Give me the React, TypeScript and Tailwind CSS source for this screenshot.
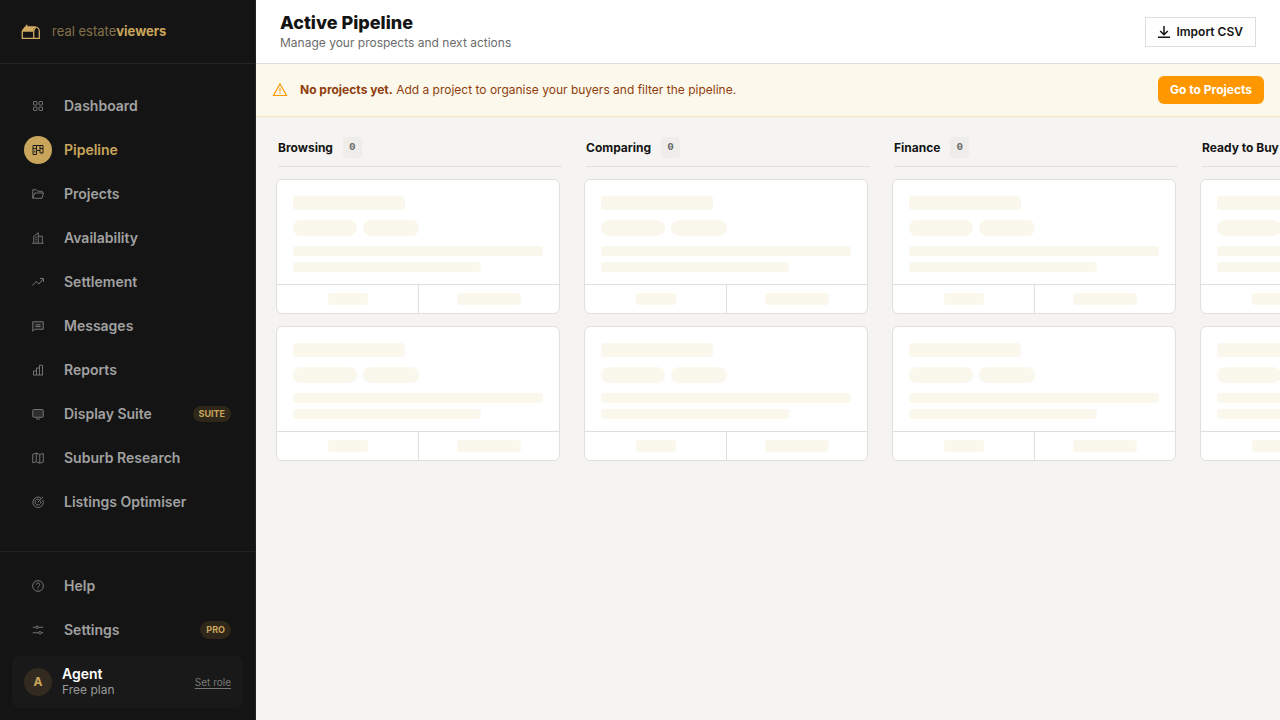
import type { ReactNode } from "react";

function Icon({ children }: { children: ReactNode }) {
  return (
    <svg viewBox="0 0 24 24" fill="none" stroke="currentColor" strokeWidth="1.900" className="size-3" aria-hidden="true">
      {children}
    </svg>
  );
}

type NavItem = { label: string; icon: ReactNode; badge?: ReactNode; active?: boolean };

const mainNav: NavItem[] = [
  {
    label: "Dashboard",
    icon: (
      <>
        <rect x="3" y="3" width="7" height="7" rx="1" />
        <rect x="14" y="3" width="7" height="7" rx="1" />
        <rect x="3" y="14" width="7" height="7" rx="1" />
        <rect x="14" y="14" width="7" height="7" rx="1" />
      </>
    ),
  },
  {
    label: "Pipeline",
    active: true,
    icon: (
      <path d="M2 3h20v15h-6v-5H9v8H2zM9 3v10M16 3v10M2 9h7M16 9h6M5.500 13v4" />
    ),
  },
  {
    label: "Projects",
    icon: <path d="M1.500 20.500V3.500h7l3 3h9V10M1.500 20.500 5.500 10h17.500l-3 10.500z" />,
  },
  {
    label: "Availability",
    icon: (
      <>
        <path d="M.500 22.500h23M3.500 22.500V8.500l9-7v21M12.500 8.500h8v14" />
        <path d="M6.500 10.500h3M6.500 14.500h3M6.500 18.500h3" />
      </>
    ),
  },
  {
    label: "Settlement",
    icon: (
      <>
        <path d="M1 19l7-8 6 5 8-10" />
        <path d="M16 5h7v7" />
      </>
    ),
  },
  {
    label: "Messages",
    icon: (
      <>
        <path d="M1.500 3.500h21v15H6l-4.500 4z" fill="currentColor" fillOpacity="0.15" />
        <path d="M7 9.500h10M7 13h10" />
      </>
    ),
  },
  {
    label: "Reports",
    icon: (
      <>
        <path d="M2 22h20" />
        <path d="M3 22v-8h6M9 22V8h6M15 22V2.500h6V22" />
      </>
    ),
  },
  {
    label: "Display Suite",
    badge: <span className="ml-auto rounded-full bg-[#2f271a] px-1.5 text-[9px] leading-4 font-bold text-[#c9a55c]">SUITE</span>,
    icon: (
      <>
        <rect x="1.500" y="3" width="21" height="15.500" rx="1.500" fill="currentColor" fillOpacity="0.25" />
        <path d="M8 22h8" />
      </>
    ),
  },
  {
    label: "Suburb Research",
    icon: (
      <>
        <path d="M1.500 4.500 8.500 2l7 3 7-2v17l-7 2.500-7-3-7 2z" />
        <path d="M8.500 2v17.500M15.500 5v17.500" />
      </>
    ),
  },
  {
    label: "Listings Optimiser",
    icon: (
      <>
        <path d="M18 3.800A10.500 10.500 0 1 0 21.800 8.200" />
        <path d="M14.800 7.200A5.800 5.800 0 1 0 17.200 10" />
        <path d="M11 13 22.500 1.500" />
      </>
    ),
  },
];

const footerNav: NavItem[] = [
  {
    label: "Help",
    icon: (
      <>
        <circle cx="12" cy="12" r="10.700" />
        <path d="M8.500 9.500a3.500 3.500 0 1 1 5.200 3c-1.300.700-1.700 1.300-1.700 2.500M12 17v2" />
      </>
    ),
  },
  {
    label: "Settings",
    badge: <span className="ml-auto rounded-full bg-[#2f271a] px-1.5 text-[9px] leading-[18px] font-bold text-[#c9a55c]">PRO</span>,
    icon: (
      <>
        <path d="M1.500 6.500h6M12.500 6.500h10M1.500 17.500h12M18.500 17.500h4" />
        <circle cx="10" cy="6.500" r="2.500" />
        <circle cx="16" cy="17.500" r="2.500" />
      </>
    ),
  },
];

const columns = ["Browsing", "Comparing", "Finance", "Ready to Buy"];

function NavLink({ item }: { item: NavItem }) {
  return (
    <li>
      <a href="#" aria-current={item.active ? "page" : undefined} className="flex h-11 items-center gap-3 px-3">
        <span
          className={
            item.active
              ? "flex size-7 items-center justify-center rounded-full bg-[#c9a55c] text-[#141414]"
              : "flex size-7 items-center justify-center text-[#777777]"
          }
        >
          <Icon>{item.icon}</Icon>
        </span>
        <span className={item.active ? "text-sm font-semibold text-[#c9a55c]" : "text-sm font-semibold text-[#a1a1a1]"}>
          {item.label}
        </span>
        {item.badge}
      </a>
    </li>
  );
}

function Sidebar() {
  return (
    <aside className="flex w-64 shrink-0 flex-col border-r border-[#222222] bg-[#141414]">
      <div className="flex h-16 shrink-0 items-center gap-3 border-b border-[#252525] px-5">
        <svg viewBox="0 0 20 16" fill="none" stroke="#d0aa62" strokeWidth="1.300" className="h-4 w-5" aria-hidden="true">
          <path d="M2.300 7v7.300h17V7.500c0-2-1.200-4.300-3.300-4.300H5.500L2.300 7" />
          <path d="M1.600 7.800 5 2.600h10.500c-1.300 1-2 2.800-2 5.200z" fill="#d0aa62" stroke="none" />
          <path d="M13.700 14V8c0-2 .800-3.800 2.300-4.800" />
          <path d="M6.700 4V.800" strokeWidth="1.600" />
        </svg>
        <span className="text-[13px] text-[#83704a]">
          real estate<b className="font-bold text-[#c9a55c]">viewers</b>
        </span>
      </div>
      <nav aria-label="Main" className="flex-1 px-3 py-5">
        <ul>
          {mainNav.map((item) => (
            <NavLink key={item.label} item={item} />
          ))}
        </ul>
      </nav>
      <div className="border-t border-[#222222] p-3">
        <ul>
          {footerNav.map((item) => (
            <NavLink key={item.label} item={item} />
          ))}
        </ul>
        <div className="mt-1 flex h-13 items-center gap-2.5 rounded-lg bg-[#191919] px-3">
          <span className="flex size-7 items-center justify-center rounded-full bg-[#332b20] text-xs font-bold text-[#c9a55c]">A</span>
          <div>
            <p className="text-sm leading-4 font-semibold text-white">Agent</p>
            <p className="text-xs text-[#999999]">Free plan</p>
          </div>
          <a href="#" className="ml-auto text-[10px] text-[#777777] underline underline-offset-2">
            Set role
          </a>
        </div>
      </div>
    </aside>
  );
}

function SkeletonCard() {
  return (
    <div className="rounded-md border border-[#e1dfda] bg-white">
      <div className="px-4 pt-4 pb-3">
        <div className="h-3.5 w-28 rounded-[3px] bg-[#faf7ed]" />
        <div className="mt-2.5 flex gap-1.5">
          <div className="h-4 w-16 rounded-full bg-[#faf7ed]" />
          <div className="h-4 w-14 rounded-full bg-[#faf7ed]" />
        </div>
        <div className="mt-2.5 h-2.5 rounded-[3px] bg-[#faf7ed]" />
        <div className="mt-1.5 h-2.5 w-3/4 rounded-[3px] bg-[#faf7ed]" />
      </div>
      <div className="grid grid-cols-2 border-t border-[#e1dfda]">
        <div className="flex justify-center py-2">
          <div className="h-3 w-10 rounded-[3px] bg-[#faf7ed]" />
        </div>
        <div className="flex justify-center border-l border-[#e1dfda] py-2">
          <div className="h-3 w-16 rounded-[3px] bg-[#faf7ed]" />
        </div>
      </div>
    </div>
  );
}

export default function App() {
  return (
    <div className="flex min-h-screen bg-[#f6f4f2] font-['Inter',sans-serif] text-[#141414]">
      <Sidebar />
      <main className="flex min-w-0 flex-1 flex-col">
        <header className="flex h-16 shrink-0 items-center justify-between border-b border-[#e0deda] bg-white px-6">
          <div className="pt-0.5">
            <h1 className="text-lg leading-5 font-extrabold">Active Pipeline</h1>
            <p className="text-xs leading-5 text-[#6b6b6b]">Manage your prospects and next actions</p>
          </div>
          <button type="button" className="flex h-[30px] items-center gap-1.5 border border-[#e0deda] bg-white px-3 text-xs font-semibold">
            <svg viewBox="1 1 12 12" fill="none" stroke="currentColor" strokeWidth="1.500" className="size-3" aria-hidden="true">
              <path d="M7 1v8.500M3.200 6 7 9.700 10.800 6M1 12.200h12" />
            </svg>
            Import CSV
          </button>
        </header>
        <section className="flex items-center gap-3 border-b border-[#f2e8bd] bg-[#fcf9ec] px-4 py-3">
          <svg viewBox="0 0 16 16" fill="none" stroke="#ff9800" strokeWidth="1.200" className="size-4" aria-hidden="true">
            <path d="M8 2 14.500 13.500h-13zM8 6.200v3.600M8 10.800v1.200" />
          </svg>
          <p className="text-xs text-[#8f3d0c]">
            <b className="font-bold">No projects yet.</b> Add a project to organise your buyers and filter the pipeline.
          </p>
          <button type="button" className="ml-auto h-7 rounded-md bg-[#ff9800] px-3 text-xs font-bold text-white">
            Go to Projects
          </button>
        </section>
        <div className="flex flex-1 gap-5 overflow-hidden px-5 py-5">
          {columns.map((name) => (
            <section key={name} className="w-72 shrink-0">
              <div className="mx-0.5 mb-3 flex items-center gap-2.5 border-b border-[#e0deda] pb-2">
                <h2 className="text-xs font-bold">{name}</h2>
                <span className="rounded-[3px] bg-[#efedea] px-1.5 font-['Liberation_Mono',monospace] text-[11px] leading-[21px] font-bold text-[#6b6b6b]">0</span>
              </div>
              <div className="flex flex-col gap-3 pr-1">
                <SkeletonCard />
                <SkeletonCard />
              </div>
            </section>
          ))}
        </div>
      </main>
    </div>
  );
}
